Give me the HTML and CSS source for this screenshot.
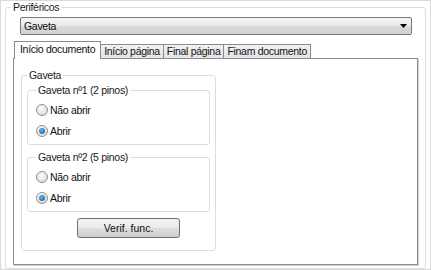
FILE: index.html
```html
<!DOCTYPE html>
<html lang="pt">
<head>
  <meta charset="UTF-8">
  <title>Periféricos</title>
  <link rel="stylesheet" href="styles.css">
</head>
<body>
  <div class="window">
    <fieldset class="group outer">
      <legend>Periféricos</legend>

      <div class="select">
        <span>Gaveta</span>
        <svg width="7" height="4" viewBox="0 0 7 4"><polygon points="0,0 7,0 3.5,4" fill="#000"/></svg>
      </div>

      <div class="tabs">
        <div class="tab active">Início documento</div>
        <div class="tab">Início página</div>
        <div class="tab">Final página</div>
        <div class="tab">Finam documento</div>
      </div>

      <div class="panel">
        <fieldset class="group drawer">
          <legend>Gaveta</legend>

          <fieldset class="group sub">
            <legend>Gaveta nº1 (2 pinos)</legend>
            <label class="radio"><span class="dot"></span>Não abrir</label>
            <label class="radio"><span class="dot checked"></span>Abrir</label>
          </fieldset>

          <fieldset class="group sub">
            <legend>Gaveta nº2 (5 pinos)</legend>
            <label class="radio"><span class="dot"></span>Não abrir</label>
            <label class="radio"><span class="dot checked"></span>Abrir</label>
          </fieldset>

          <button class="btn">Verif. func.</button>
        </fieldset>
      </div>
    </fieldset>
  </div>
</body>
</html>
```

FILE: styles.css
```css
html, body {
  margin: 0;
  padding: 0;
}
body {
  font-family: "Liberation Sans", Arial, sans-serif;
  font-size: 10.5px;
  letter-spacing: -0.3px;
  color: #111;
  background: #fff;
}
.window {
  box-sizing: border-box;
  width: 431px;
  height: 270px;
  border: 1px solid #dadada;
  background: #fff;
  padding: 0 4px 0 4px;
}

/* group boxes */
.group {
  margin: 0;
  border: 1px solid #d5dfe5;
  border-radius: 3px;
  min-width: 0;
}
.group legend {
  line-height: 12px;
  padding: 0 2px;
  color: #1a1a1a;
}
.outer {
  box-sizing: border-box;
  height: 268px;
  padding: 4px 7px 0 7px;
}
.outer > legend {
  margin-left: -2px;
}

/* combo box */
.select {
  box-sizing: border-box;
  height: 18px;
  margin: 0 6px 0 7px;
  border: 1px solid #7a7a7a;
  border-radius: 2px;
  background: linear-gradient(#f4f4f4, #e8e8e8 50%, #d9d9d9 51%, #d3d3d3);
  display: flex;
  align-items: center;
  justify-content: space-between;
  padding: 0 4px 0 3px;
}

/* tabs */
.tabs {
  display: flex;
  align-items: flex-end;
  margin-top: 6px;
  padding-left: 3px;
  height: 17px;
}
.tab {
  box-sizing: border-box;
  height: 14px;
  line-height: 13px;
  padding: 0 3px;
  border: 1px solid #898c95;
  border-bottom: none;
  margin-right: -1px;
  background: linear-gradient(#f2f2f2, #e4e4e4);
  white-space: nowrap;
}
.tab.active {
  height: 18px;
  line-height: 15px;
  margin: 0 -1px -1px -2px;
  padding: 0 5px;
  background: #fff;
  position: relative;
  z-index: 1;
}
.panel {
  box-sizing: border-box;
  height: 207px;
  border: 1px solid #898c95;
  box-shadow: 1px 1px 0 #d0d0d0;
  background: #fff;
  padding: 10px 7px;
}

/* inner groups */
.drawer {
  box-sizing: border-box;
  width: 195px;
  height: 182px;
  padding: 3px 5px 0 5px;
}
.sub {
  box-sizing: border-box;
  height: 61px;
  padding: 3px 8px 0 8px;
  margin-bottom: 6px;
}
.radio {
  display: flex;
  align-items: center;
  height: 21px;
}
.dot {
  box-sizing: border-box;
  width: 12px;
  height: 12px;
  border-radius: 50%;
  border: 1px solid #8e8f8f;
  background: radial-gradient(circle at 40% 35%, #fdfdfd, #d4d4d4);
  margin-right: 2px;
  display: flex;
  align-items: center;
  justify-content: center;
}
.dot.checked::after {
  content: "";
  width: 6px;
  height: 6px;
  border-radius: 50%;
  background: radial-gradient(circle at 40% 35%, #5fb4ee, #0d5ba0);
}

.btn {
  box-sizing: border-box;
  display: block;
  width: 103px;
  height: 20px;
  margin: 1px 0 0 50px;
  border: 1px solid #707070;
  border-radius: 3px;
  background: linear-gradient(#f2f2f2, #ebebeb 50%, #dddddd 51%, #cfcfcf);
  font: inherit;
  color: #111;
  padding: 0;
}
```
